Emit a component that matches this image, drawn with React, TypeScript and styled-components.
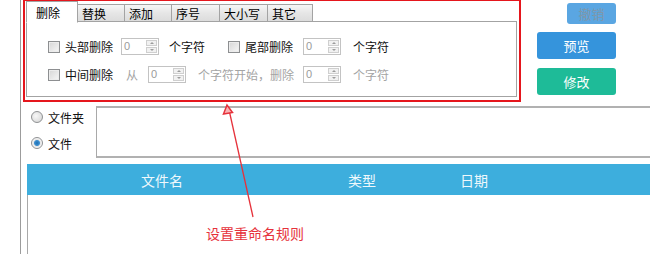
import React, { useState } from 'react'
import styled, { createGlobalStyle } from 'styled-components'

const GlobalStyle = createGlobalStyle`
  html, body {
    margin: 0;
    padding: 0;
    background: #fff;
  }
  body {
    font-family: "Noto Sans CJK SC", "Noto Sans", sans-serif;
    font-size: 12px;
    color: #111;
  }
`

const StyledPage = styled.div`
  position: relative;
  width: 650px;
  height: 254px;
  overflow: hidden;
  display: flex;
  background: #fff;
`
const StyledGutter = styled.div`
  width: 20px;
  flex: none;
  border-right: 1px solid #9c9c9c;
`
const StyledMain = styled.div`
  flex: 1;
  display: flex;
  flex-direction: column;
  min-width: 0;
`
const StyledTopRow = styled.div`
  display: flex;
  padding: 1px 0 0 5px;
`
const StyledTabControl = styled.div`
  width: 491px;
  display: flex;
  flex-direction: column;
`
const StyledTabStrip = styled.div`
  display: flex;
  align-items: flex-end;
  height: 21px;
  position: relative;
  z-index: 1;
`
const StyledTab = styled.div<{ $active?: boolean; $w: number }>`
  box-sizing: border-box;
  width: ${p => p.$w}px;
  height: ${p => (p.$active ? 22 : 18)}px;
  margin-bottom: ${p => (p.$active ? -1 : 0)}px;
  padding-left: ${p => (p.$active ? 9 : 4)}px;
  line-height: ${p => (p.$active ? 22 : 18)}px;
  font-size: 12px;
  color: #000;
  border: 1px solid #a3a3a3;
  border-bottom: ${p => (p.$active ? '1px solid #fff' : '1px solid #a3a3a3')};
  border-left-width: ${p => (p.$active ? 1 : 0)}px;
  background: ${p =>
    p.$active ? '#fff' : 'linear-gradient(#f6f6f6, #e6e6e6 50%, #dcdcdc)'};
  white-space: nowrap;
`
const StyledTabFill = styled.div`
  flex: 1;
  height: 1px;
  background: #a3a3a3;
`
const StyledPanel = styled.div`
  box-sizing: border-box;
  height: 75px;
  border: 1px solid #a3a3a3;
  border-top: none;
  background: #fff;
  padding: 16px 0 0 21px;
  display: flex;
  flex-direction: column;
  gap: 11px;
`
const StyledRow = styled.div`
  display: flex;
  align-items: center;
  height: 17px;
`
const StyledCheck = styled.span<{ $ml?: number }>`
  box-sizing: border-box;
  width: 12px;
  height: 12px;
  margin-left: ${p => p.$ml || 0}px;
  border: 1px solid #8d8f91;
  background: linear-gradient(135deg, #d6d6d6, #f7f7f7);
  box-shadow: inset 0 0 0 1px #ececec;
  flex: none;
`
const StyledLabel = styled.span<{ $ml?: number; $muted?: boolean }>`
  margin-left: ${p => p.$ml || 0}px;
  font-size: 12px;
  line-height: 17px;
  color: ${p => (p.$muted ? '#a4a4a4' : '#111')};
  white-space: nowrap;
`
const StyledSpin = styled.div<{ $ml?: number }>`
  box-sizing: border-box;
  width: 38px;
  height: 17px;
  margin-left: ${p => p.$ml || 0}px;
  border: 1px solid #c3c3c3;
  background: #fff;
  display: flex;
  align-items: stretch;
  flex: none;
`
const StyledSpinValue = styled.span`
  flex: 1;
  padding-left: 2px;
  font-family: "Liberation Sans", Arial, sans-serif;
  font-size: 11px;
  line-height: 14px;
  color: #9a9a9a;
`
const StyledSpinButtons = styled.div`
  width: 11px;
  margin: 1px 1px 1px 0;
  display: flex;
  flex-direction: column;
  gap: 1px;
`
const StyledSpinArrow = styled.div<{ $down?: boolean }>`
  flex: 1;
  box-sizing: border-box;
  border: 1px solid #cfcfcf;
  background: #f1f1f1;
  display: flex;
  align-items: center;
  justify-content: center;
  &::after {
    content: '';
    border-left: 2px solid transparent;
    border-right: 2px solid transparent;
    ${p =>
      p.$down ? 'border-top: 2px solid #9c9c9c;' : 'border-bottom: 2px solid #9c9c9c;'}
  }
`
const StyledButtons = styled.div`
  margin-left: 20px;
  width: 79px;
  display: flex;
  flex-direction: column;
  align-items: flex-end;
  padding-top: 2px;
`
const StyledButton = styled.button<{ $tone: 'disabled' | 'blue' | 'green'; $w: number; $h: number; $mt: number }>`
  box-sizing: border-box;
  width: ${p => p.$w}px;
  height: ${p => p.$h}px;
  margin-top: ${p => p.$mt}px;
  border: none;
  border-radius: 3px;
  padding: 0;
  font-family: "Noto Sans CJK SC", sans-serif;
  font-size: 13px;
  line-height: ${p => p.$h}px;
  cursor: pointer;
  color: ${p => (p.$tone === 'disabled' ? '#7e97ab' : '#fff')};
  background: ${p =>
    p.$tone === 'disabled' ? '#5aa6e2' : p.$tone === 'blue' ? '#3594dc' : '#1ebb98'};
`
const StyledSourceRow = styled.div`
  display: flex;
  margin-top: 9px;
  height: 52px;
`
const StyledRadios = styled.div`
  width: 75px;
  flex: none;
  padding-left: 10px;
  box-sizing: border-box;
  display: flex;
  flex-direction: column;
  gap: 4px;
`
const StyledRadioRow = styled.label`
  display: flex;
  align-items: center;
  height: 22px;
  gap: 5px;
  font-size: 12px;
  cursor: pointer;
`
const StyledRadio = styled.span<{ $on?: boolean }>`
  box-sizing: border-box;
  width: 12px;
  height: 12px;
  border-radius: 50%;
  border: 1px solid #8f9193;
  background: ${p =>
    p.$on
      ? 'radial-gradient(circle, #1d6fb3 0, #3d8fd0 2.5px, #e6e6e6 3.5px, #f8f8f8 5px)'
      : 'radial-gradient(circle at 40% 40%, #f8f8f8, #d2d2d2)'};
  flex: none;
`
const StyledPathBox = styled.div`
  flex: 1;
  box-sizing: border-box;
  border: 1px solid #a9a9a9;
  border-top: 2px solid #b1b1b1;
  border-bottom: 2px solid #b1b1b1;
  border-right: none;
  background: #fff;
`
const StyledList = styled.div`
  margin: 6px 0 0 6px;
  flex: 1;
  display: flex;
  flex-direction: column;
  border-left: 1px solid #a9a9a9;
`
const StyledHeader = styled.div`
  height: 31px;
  background: #3daedd;
  display: grid;
  grid-template-columns: 270px 130px 94px 1fr;
  align-items: center;
  color: #eef8fc;
  font-size: 14px;
  margin-left: -1px;
`
const StyledHeaderCell = styled.span`
  text-align: center;
`
const StyledBody = styled.div`
  flex: 1;
  background: #fff;
`
const StyledCallout = styled.div`
  position: absolute;
  left: 23px;
  top: -1px;
  width: 498px;
  height: 103px;
  box-sizing: border-box;
  border: 2px solid #e5161d;
  pointer-events: none;
`
const StyledArrow = styled.svg`
  position: absolute;
  left: 0;
  top: 0;
  pointer-events: none;
`
const StyledNote = styled.div`
  position: absolute;
  left: 206px;
  top: 224px;
  font-size: 14px;
  line-height: 18px;
  color: #e6323b;
  white-space: nowrap;
`

const tabs = [
  { name: '删除', w: 52 },
  { name: '替换', w: 47 },
  { name: '添加', w: 47 },
  { name: '序号', w: 48 },
  { name: '大小写', w: 48 },
  { name: '其它', w: 45 },
]

const Spin: React.FC<{ ml?: number }> = ({ ml }) => (
  <StyledSpin $ml={ml}>
    <StyledSpinValue>0</StyledSpinValue>
    <StyledSpinButtons>
      <StyledSpinArrow />
      <StyledSpinArrow $down />
    </StyledSpinButtons>
  </StyledSpin>
)

const App: React.FC = () => {
  const [activeIndex, setactiveIndex] = useState(0)
  const [source, setsource] = useState('file')
  return (
    <StyledPage>
      <GlobalStyle />
      <StyledGutter />
      <StyledMain>
        <StyledTopRow>
          <StyledTabControl>
            <StyledTabStrip>
              {tabs.map((t, i) => (
                <StyledTab
                  key={t.name}
                  $w={t.w}
                  $active={i === activeIndex}
                  onClick={() => setactiveIndex(i)}
                >
                  {t.name}
                </StyledTab>
              ))}
              <StyledTabFill />
            </StyledTabStrip>
            <StyledPanel>
              <StyledRow>
                <StyledCheck />
                <StyledLabel $ml={5}>头部删除</StyledLabel>
                <Spin ml={8} />
                <StyledLabel $ml={10}>个字符</StyledLabel>
                <StyledCheck $ml={23} />
                <StyledLabel $ml={5}>尾部删除</StyledLabel>
                <Spin ml={10} />
                <StyledLabel $ml={12}>个字符</StyledLabel>
              </StyledRow>
              <StyledRow>
                <StyledCheck />
                <StyledLabel $ml={5}>中间删除</StyledLabel>
                <StyledLabel $ml={13} $muted>从</StyledLabel>
                <Spin ml={10} />
                <StyledLabel $ml={12} $muted>个字符开始，删除</StyledLabel>
                <Spin ml={9} />
                <StyledLabel $ml={12} $muted>个字符</StyledLabel>
              </StyledRow>
            </StyledPanel>
          </StyledTabControl>
          <StyledButtons>
            <StyledButton $tone="disabled" $w={49} $h={21} $mt={0} disabled>
              撤销
            </StyledButton>
            <StyledButton $tone="blue" $w={79} $h={27} $mt={8}>
              预览
            </StyledButton>
            <StyledButton $tone="green" $w={79} $h={27} $mt={9}>
              修改
            </StyledButton>
          </StyledButtons>
        </StyledTopRow>
        <StyledSourceRow>
          <StyledRadios>
            <StyledRadioRow onClick={() => setsource('folder')}>
              <StyledRadio $on={source === 'folder'} />
              文件夹
            </StyledRadioRow>
            <StyledRadioRow onClick={() => setsource('file')}>
              <StyledRadio $on={source === 'file'} />
              文件
            </StyledRadioRow>
          </StyledRadios>
          <StyledPathBox />
        </StyledSourceRow>
        <StyledList>
          <StyledHeader>
            <StyledHeaderCell>文件名</StyledHeaderCell>
            <StyledHeaderCell>类型</StyledHeaderCell>
            <StyledHeaderCell>日期</StyledHeaderCell>
            <span />
          </StyledHeader>
          <StyledBody />
        </StyledList>
      </StyledMain>
      <StyledCallout />
      <StyledArrow width="650" height="254" viewBox="0 0 650 254">
        <line x1="253" y1="217" x2="229.5" y2="112" stroke="#e6323b" strokeWidth="1.3" />
        <polygon
          points="227,105 223.5,114 232.5,112.5"
          fill="#f7b3b5"
          stroke="#e6323b"
          strokeWidth="1.5"
          strokeLinejoin="miter"
        />
      </StyledArrow>
      <StyledNote>设置重命名规则</StyledNote>
    </StyledPage>
  )
}

export default App
